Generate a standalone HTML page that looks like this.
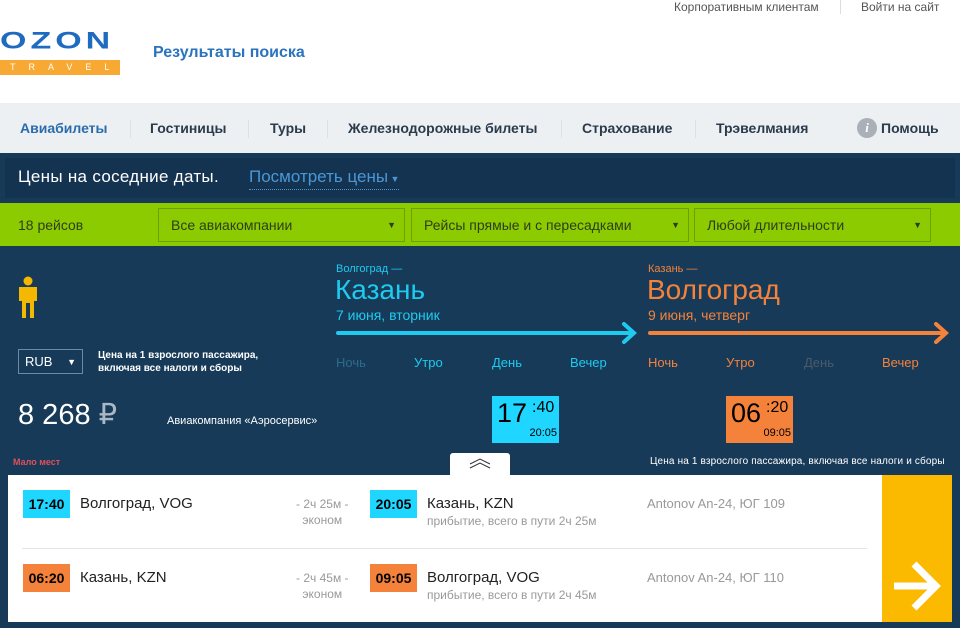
<!DOCTYPE html>
<html><head><meta charset="utf-8"><style>
*{margin:0;padding:0;box-sizing:border-box}
body{width:968px;height:628px;overflow:hidden;background:#fff;font-family:"Liberation Sans",sans-serif;position:relative}
.a{position:absolute;white-space:nowrap}
</style></head><body>
<div class="a" style="left:674px;top:0;font-size:12px;color:#555">Корпоративным клиентам</div>
<div class="a" style="left:840px;top:0;width:1px;height:14px;background:#ddd"></div>
<div class="a" style="left:861px;top:0;font-size:12px;color:#555">Войти на сайт</div>
<!-- logo -->
<div class="a" style="left:0;top:30px;font-size:34px;font-weight:bold;color:#1f6bc0;letter-spacing:4px;line-height:30px;transform:scaleY(0.72);transform-origin:top left">OZON</div>
<div class="a" style="left:0;top:60px;width:120px;height:15px;background:#f7a934;color:#fff;font-size:9px;letter-spacing:13px;line-height:15px;padding-left:10px">TRAVEL</div>
<div class="a" style="left:153px;top:44px;font-size:16px;font-weight:bold;color:#2a73be">Результаты поиска</div>
<!-- nav -->
<div class="a" style="left:0;top:103px;width:960px;height:50px;background:#edf0f3"></div>
<div class="a" style="top:120px;left:20px;font-size:14px;font-weight:bold;color:#2a6cab">Авиабилеты</div>
<div class="a" style="top:120px;left:150px;font-size:14px;font-weight:bold;color:#2a3b4c">Гостиницы</div>
<div class="a" style="top:120px;left:270px;font-size:14px;font-weight:bold;color:#2a3b4c">Туры</div>
<div class="a" style="top:120px;left:348px;font-size:14px;font-weight:bold;color:#2a3b4c">Железнодорожные билеты</div>
<div class="a" style="top:120px;left:582px;font-size:14px;font-weight:bold;color:#2a3b4c">Страхование</div>
<div class="a" style="top:120px;left:716px;font-size:14px;font-weight:bold;color:#2a3b4c">Трэвелмания</div>
<div class="a" style="top:118px;left:857px;width:20px;height:20px;border-radius:50%;background:#a9b0b7;color:#fff;font:italic bold 13px 'Liberation Serif',serif;text-align:center;line-height:20px">i</div>
<div class="a" style="top:120px;left:881px;font-size:14px;font-weight:bold;color:#2a3b4c">Помощь</div>
<div class="a" style="left:130px;top:120px;width:1px;height:18px;background:#dde1e5"></div>
<div class="a" style="left:248px;top:120px;width:1px;height:18px;background:#dde1e5"></div>
<div class="a" style="left:327px;top:120px;width:1px;height:18px;background:#dde1e5"></div>
<div class="a" style="left:561px;top:120px;width:1px;height:18px;background:#dde1e5"></div>
<div class="a" style="left:695px;top:120px;width:1px;height:18px;background:#dde1e5"></div>
<!-- dark -->
<div class="a" style="left:0;top:153px;width:960px;height:475px;background:#173a58"></div>
<div class="a" style="left:5px;top:158px;width:950px;height:40px;background:#133350"></div>
<div class="a" style="left:18px;top:167px;font-size:17px;color:#fff;letter-spacing:0.3px">Цены на соседние даты.</div>
<div class="a" style="left:249px;top:167px;font-size:17px;color:#4b97d6;border-bottom:1px dotted #4b97d6;line-height:19px">Посмотреть цены<span style="font-size:9px"> ▼</span></div>
<!-- green -->
<div class="a" style="left:0;top:203px;width:960px;height:43px;background:#8ccb00"></div>
<div class="a" style="left:18px;top:217px;font-size:14px;color:#2c3e1a">18 рейсов</div>
<div class="a" style="left:158px;top:208px;width:247px;height:34px;border:1px solid #6ea000;font-size:14px;color:#2c3e1a;padding:8px 12px">Все авиакомпании<span style="position:absolute;right:8px;font-size:9px;top:11px">▼</span></div>
<div class="a" style="left:411px;top:208px;width:278px;height:34px;border:1px solid #6ea000;font-size:14px;color:#2c3e1a;padding:8px 12px">Рейсы прямые и с пересадками<span style="position:absolute;right:8px;font-size:9px;top:11px">▼</span></div>
<div class="a" style="left:694px;top:208px;width:237px;height:34px;border:1px solid #6ea000;font-size:14px;color:#2c3e1a;padding:8px 12px">Любой длительности<span style="position:absolute;right:8px;font-size:9px;top:11px">▼</span></div>
<!-- person -->
<svg class="a" style="left:17px;top:276px" width="22" height="42" viewBox="0 0 22 42"><circle cx="11" cy="5" r="4.5" fill="#f5b800"/><path d="M2 11h18v14h-3v17h-4V27h-4v15H5V25H2z" fill="#f5b800"/></svg>
<div class="a" style="left:18px;top:349px;width:65px;height:25px;border:1px solid #6c8aa6;color:#fff;font-size:13px;padding:4px 6px">RUB<span style="position:absolute;right:6px;top:7px;font-size:9px">▼</span></div>
<div class="a" style="left:98px;top:349px;font-size:10px;color:#fff;line-height:13px;font-weight:bold">Цена на 1 взрослого пассажира,<br>включая все налоги и сборы</div>
<div class="a" style="left:18px;top:397px;font-size:29px;color:#fff">8 268 <span style="color:#aab8c6">₽</span></div>
<div class="a" style="left:167px;top:415px;font-size:11px;color:#fff">Авиакомпания «Аэросервис»</div>
<div class="a" style="left:13px;top:457px;font-size:9px;color:#e0505a;font-weight:bold">Мало мест</div>
<!-- route 1 -->
<div class="a" style="left:336px;top:263px;font-size:11px;color:#1ecbef">Волгоград —</div>
<div class="a" style="left:335px;top:274px;font-size:28px;color:#1ecbef">Казань</div>
<div class="a" style="left:336px;top:307px;font-size:14px;color:#1ecbef">7 июня, вторник</div>
<div class="a" style="left:336px;top:331px;width:296px;height:4px;border-radius:2px;background:#1ecbef"></div>
<svg class="a" style="left:621px;top:322px" width="16" height="22"><path d="M3 2l10 9-10 9" stroke="#1ecbef" stroke-width="4" fill="none" stroke-linecap="round"/></svg>
<div class="a" style="left:336px;top:355px;font-size:13px;color:#2e6b8a">Ночь</div>
<div class="a" style="left:414px;top:355px;font-size:13px;color:#1ecbef">Утро</div>
<div class="a" style="left:492px;top:355px;font-size:13px;color:#1ecbef">День</div>
<div class="a" style="left:570px;top:355px;font-size:13px;color:#1ecbef">Вечер</div>
<div class="a" style="left:492px;top:396px;width:67px;height:47px;background:#1ed6ff;color:#000"><span class="a" style="left:5px;top:2px;font-size:27px">17</span><span class="a" style="left:40px;top:3px;font-size:16px">:40</span><span class="a" style="right:2px;top:31px;font-size:11px">20:05</span></div>
<!-- route 2 -->
<div class="a" style="left:648px;top:263px;font-size:11px;color:#f5823a">Казань —</div>
<div class="a" style="left:647px;top:274px;font-size:28px;color:#f5823a">Волгоград</div>
<div class="a" style="left:648px;top:307px;font-size:14px;color:#f5823a">9 июня, четверг</div>
<div class="a" style="left:648px;top:331px;width:296px;height:4px;border-radius:2px;background:#f5823a"></div>
<svg class="a" style="left:933px;top:322px" width="16" height="22"><path d="M3 2l10 9-10 9" stroke="#f5823a" stroke-width="4" fill="none" stroke-linecap="round"/></svg>
<div class="a" style="left:648px;top:355px;font-size:13px;color:#f5823a">Ночь</div>
<div class="a" style="left:726px;top:355px;font-size:13px;color:#f5823a">Утро</div>
<div class="a" style="left:804px;top:355px;font-size:13px;color:#4a5a68">День</div>
<div class="a" style="left:882px;top:355px;font-size:13px;color:#f5823a">Вечер</div>
<div class="a" style="left:726px;top:396px;width:67px;height:47px;background:#f5823a;color:#000"><span class="a" style="left:5px;top:2px;font-size:27px">06</span><span class="a" style="left:40px;top:3px;font-size:16px">:20</span><span class="a" style="right:2px;top:31px;font-size:11px">09:05</span></div>
<div class="a" style="left:650px;top:456px;font-size:10px;color:#fff;letter-spacing:0.15px">Цена на 1 взрослого пассажира, включая все налоги и сборы</div>
<!-- tab -->
<div class="a" style="left:450px;top:453px;width:60px;height:24px;background:#fff;border-radius:3px 3px 0 0"></div>
<svg class="a" style="left:469px;top:457px" width="22" height="12"><path d="M1 7l10-5 10 5M1 11l10-5 10 5" stroke="#333" stroke-width="1" fill="none"/></svg>
<!-- card -->
<div class="a" style="left:8px;top:475px;width:944px;height:147px;background:#fff"></div>
<div class="a" style="left:882px;top:475px;width:70px;height:147px;background:#fbb900"></div>
<svg class="a" style="left:892px;top:560px" width="50" height="52"><path d="M2 26h40M22 4l22 22-22 22" stroke="#fff" stroke-width="7" fill="none"/></svg>
<div class="a" style="left:22px;top:548px;width:845px;height:1px;background:#e3e6e9"></div>
<div class="a" style="left:23px;top:490px;width:47px;height:28px;background:#1ed6ff;font-size:14px;font-weight:bold;line-height:28px;text-align:center">17:40</div>
<div class="a" style="left:80px;top:495px;font-size:15px;color:#222">Волгоград, VOG</div>
<div class="a" style="left:296px;top:496px;font-size:12px;color:#999;text-align:center;line-height:16px">- 2ч 25м -<br>эконом</div>
<div class="a" style="left:370px;top:490px;width:47px;height:28px;background:#1ed6ff;font-size:14px;font-weight:bold;line-height:28px;text-align:center">20:05</div>
<div class="a" style="left:427px;top:495px;font-size:15px;color:#222">Казань, KZN</div>
<div class="a" style="left:427px;top:514px;font-size:12px;color:#999">прибытие, всего в пути 2ч 25м</div>
<div class="a" style="left:647px;top:496px;font-size:13px;color:#999">Antonov An-24, ЮГ 109</div>
<div class="a" style="left:23px;top:564px;width:47px;height:28px;background:#f5823a;font-size:14px;font-weight:bold;line-height:28px;text-align:center">06:20</div>
<div class="a" style="left:80px;top:569px;font-size:15px;color:#222">Казань, KZN</div>
<div class="a" style="left:296px;top:570px;font-size:12px;color:#999;text-align:center;line-height:16px">- 2ч 45м -<br>эконом</div>
<div class="a" style="left:370px;top:564px;width:47px;height:28px;background:#f5823a;font-size:14px;font-weight:bold;line-height:28px;text-align:center">09:05</div>
<div class="a" style="left:427px;top:569px;font-size:15px;color:#222">Волгоград, VOG</div>
<div class="a" style="left:427px;top:588px;font-size:12px;color:#999">прибытие, всего в пути 2ч 45м</div>
<div class="a" style="left:647px;top:570px;font-size:13px;color:#999">Antonov An-24, ЮГ 110</div>
</body></html>
